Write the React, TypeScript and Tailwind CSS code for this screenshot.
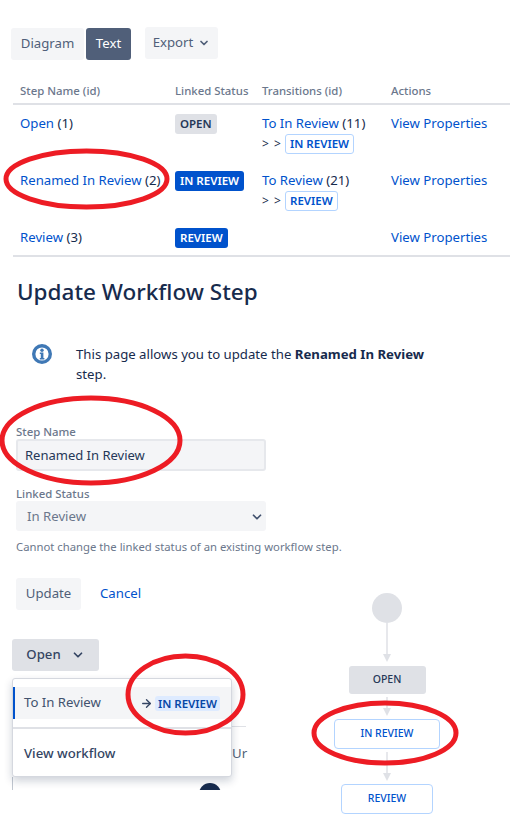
import React from 'react';
import { ArrowRight, ChevronDown } from 'lucide-react';

const Lozenge = ({ kind, children }: { kind: 'gray' | 'blue' | 'outline'; children: React.ReactNode }) => {
    const styles = {
        gray: 'bg-[#dfe1e6] text-[#253858] px-[5px]',
        blue: 'bg-[#0052cc] text-white px-[5px]',
        outline: 'bg-white text-[#0052cc] border border-[#b3d4ff] px-[4px]',
    };
    return (
        <span className={`inline-flex items-center h-5 rounded-[3px] text-[11.5px] font-semibold leading-none ${styles[kind]}`}>
            {children}
        </span>
    );
};

const Link = ({ children }: { children: React.ReactNode }) => <a href="#" className="text-[#0052cc]">{children}</a>;

const Ellipse = ({ x, y, w, h }: { x: number; y: number; w: number; h: number }) => (
    <svg className="absolute pointer-events-none" style={{ left: x, top: y }} width={w} height={h} viewBox={`0 0 ${w} ${h}`} fill="none">
        <ellipse cx={w / 2} cy={h / 2} rx={w / 2 - 3} ry={h / 2 - 3} stroke="#ed1c24" strokeWidth="5" />
    </svg>
);

const Connector = ({ height }: { height: number }) => (
    <svg width="12" height={height} viewBox={`0 0 12 ${height}`} className="block">
        <path d={`M6 0V${height - 6}`} stroke="#dfe1e6" strokeWidth="1.5" />
        <path d={`M2 ${height - 8}H10L6 ${height}Z`} fill="#dfe1e6" />
    </svg>
);

const Row = ({ name, id, status, transition, last }: { name: string; id: number; status: React.ReactNode; transition?: React.ReactNode; last?: boolean }) => (
    <div className={`grid grid-cols-[155px_87px_129px_1fr] pl-[7px] pt-[8px] ${last ? 'h-[36px]' : 'h-[57px]'}`}>
        <div className="leading-5"><Link>{name}</Link> ({id})</div>
        <div className="leading-5">{status}</div>
        <div>{transition}</div>
        <div className="leading-5"><Link>View Properties</Link></div>
    </div>
);

const Transition = ({ name, id, to }: { name: string; id: number; to: string }) => (
    <>
        <div className="leading-5"><Link>{name}</Link> ({id})</div>
        <div className="flex items-center h-5 mt-px"><span className="w-[23px] text-[12px] tracking-[1px]">&gt; &gt;</span><Lozenge kind="outline">{to}</Lozenge></div>
    </>
);

export default function App() {
    return (
        <div className="relative w-[510px] h-[833px] overflow-hidden bg-white text-[13.2px] text-[#172b4d] font-['Noto_Sans','Roboto',sans-serif]">
            <div className="flex items-start pt-[27px] pl-[11px]">
                <button className="mt-px h-8 w-[73px] rounded-[3px] bg-[#f4f5f7] text-[#505f79]">Diagram</button>
                <button className="mt-px ml-[2px] h-8 w-[45px] rounded-[3px] bg-[#505f79] text-white">Text</button>
                <button className="ml-[14px] flex h-8 w-[73px] items-center justify-center gap-[5px] rounded-[3px] bg-[#f4f5f7] text-[#505f79]">
                    Export <ChevronDown size={12} strokeWidth={3.5} />
                </button>
            </div>

            <div className="ml-[13px] mt-[21px] border-b-2 border-[#dfe1e6]">
                <div className="grid grid-cols-[155px_87px_129px_1fr] h-[24px] pl-[7px] text-[11.4px] font-medium text-[#6b778c] border-b-2 border-[#dfe1e6] leading-5">
                    <div>Step Name (id)</div>
                    <div>Linked Status</div>
                    <div>Transitions (id)</div>
                    <div>Actions</div>
                </div>
                <Row name="Open" id={1} status={<Lozenge kind="gray">OPEN</Lozenge>} transition={<Transition name="To In Review" id={11} to="IN REVIEW" />} />
                <Row name="Renamed In Review" id={2} status={<Lozenge kind="blue">IN REVIEW</Lozenge>} transition={<Transition name="To Review" id={21} to="REVIEW" />} />
                <Row last name="Review" id={3} status={<Lozenge kind="blue">REVIEW</Lozenge>} />
            </div>

            <h1 className="ml-[17px] mt-[19px] text-[22.5px] leading-8 font-medium">Update Workflow Step</h1>

            <div className="flex ml-[32px] mt-[29px] w-[420px]">
                <svg width="20" height="20" viewBox="0 0 20 20" className="mt-[7px] shrink-0">
                    <circle cx="10" cy="10" r="8.3" fill="#fff" stroke="#3f78b5" strokeWidth="3.4" />
                    <circle cx="10" cy="6.2" r="1.7" fill="#3f78b5" />
                    <path d="M7.8 8.6h3.6V14h1v1.4H7.8V14h1v-4h-1z" fill="#3f78b5" />
                </svg>
                <p className="ml-[24px] leading-[20px] pt-[7px]">This page allows you to update the <strong className="font-bold">Renamed In Review</strong> step.</p>
            </div>

            <div className="ml-[16px] w-[250px] mt-[40px]">
                <label className="block text-[11.4px] leading-4 font-medium text-[#6b778c]">Step Name</label>
                <div className="-mt-px h-8 rounded-[3px] border-2 border-[#e6e8ec] bg-[#f4f5f7] pl-[7px] leading-7 text-[13px] text-[#253858]">Renamed In Review</div>
                <label className="block mt-[15px] text-[11.4px] leading-4 font-medium text-[#6b778c]">Linked Status</label>
                <div className="-mt-px flex h-[30px] items-center justify-between rounded-[3px] bg-[#f4f5f7] pl-[11px] pr-[2px] pt-px text-[#6b778c]">
                    In Review
                    <ChevronDown size={14} strokeWidth={3} className="text-[#42526e]" />
                </div>
            </div>
            <p className="ml-[16px] mt-[8px] text-[11.3px] leading-4 text-[#6b778c]">Cannot change the linked status of an existing workflow step.</p>

            <div className="flex items-center ml-[16px] mt-[23px]">
                <button className="h-8 w-[65px] rounded-[3px] bg-[#f4f5f7] text-[#505f79]">Update</button>
                <a href="#" className="ml-[19px] text-[#0052cc]">Cancel</a>
            </div>

            <div className="flex mt-[29px]">
                <div className="relative ml-[12px] w-[220px] h-[160px] shrink-0">
                    <div className="absolute right-[-14px] top-[87px] w-[14px] border-t border-[#dfe1e6]" />
                    <span className="absolute left-[220px] top-[105px] text-[#505f79]">Ur</span>
                    <div className="absolute left-0 top-[138px] h-[13px] border-l border-[#c1c7d0]" />
                    <div className="absolute left-[187px] top-[144px] h-[7px] w-[22px] overflow-hidden"><div className="h-[22px] w-[22px] rounded-full bg-[#172b4d]" /></div>
                    <button className="flex h-8 w-[87px] items-center justify-center gap-[10px] rounded-[3px] bg-[#dfe1e6] font-medium text-[#344563]">
                        Open <ChevronDown size={14} strokeWidth={3} />
                    </button>
                    <div className="absolute left-0 top-[39px] w-[220px] h-[99px] rounded-[3px] border border-[#d5d8df] bg-white pt-[8px] shadow-[0_4px_8px_rgba(9,30,66,0.2)]">
                        <div className="flex items-center justify-between h-8 border-l-2 border-[#0052cc] bg-[#f4f5f7] pl-[9px] pr-[11px] text-[#42526e]">
                            To In Review
                            <span className="flex items-center gap-[2px] text-[#344563]">
                                <ArrowRight size={13} strokeWidth={2.5} />
                                <span className="rounded-[3px] bg-[#deebff] px-[3px] text-[11.5px] leading-[15px] font-semibold text-[#0747a6]">IN REVIEW</span>
                            </span>
                        </div>
                        <div className="mt-[8px] border-t-2 border-[#dfe1e6]" />
                        <div className="mt-[15px] pl-[11px] font-medium text-[#344563]">View workflow</div>
                    </div>
                </div>
                <div className="ml-[102px] -mt-[46px] w-[106px] flex flex-col items-center text-[10.5px] font-medium">
                    <div className="h-[30px] w-[30px] rounded-full bg-[#dfe1e6]" />
                    <Connector height={39} />
                    <div className="mt-[4px] flex h-7 w-[77px] items-center justify-center rounded-[3px] bg-[#dfe1e6] text-[#253858]">OPEN</div>
                    <div className="mt-[3px]"><Connector height={19} /></div>
                    <div className="mt-[3px] flex h-[30px] w-[106px] items-center justify-center rounded-[4px] border border-[#b3d4ff] bg-white text-[#0052cc]">IN REVIEW</div>
                    <div className="mt-[3px]"><Connector height={29} /></div>
                    <div className="mt-[3px] flex h-[30px] w-[92px] items-center justify-center rounded-[4px] border border-[#b3d4ff] bg-white text-[#0052cc]">REVIEW</div>
                </div>
            </div>

            <Ellipse x={3} y={148} w={167} h={62} />
            <Ellipse x={-1} y={395} w={184} h={91} />
            <Ellipse x={125} y={653} w={121} h={83} />
            <Ellipse x={311} y={700} w={148} h={66} />
        </div>
    );
}
